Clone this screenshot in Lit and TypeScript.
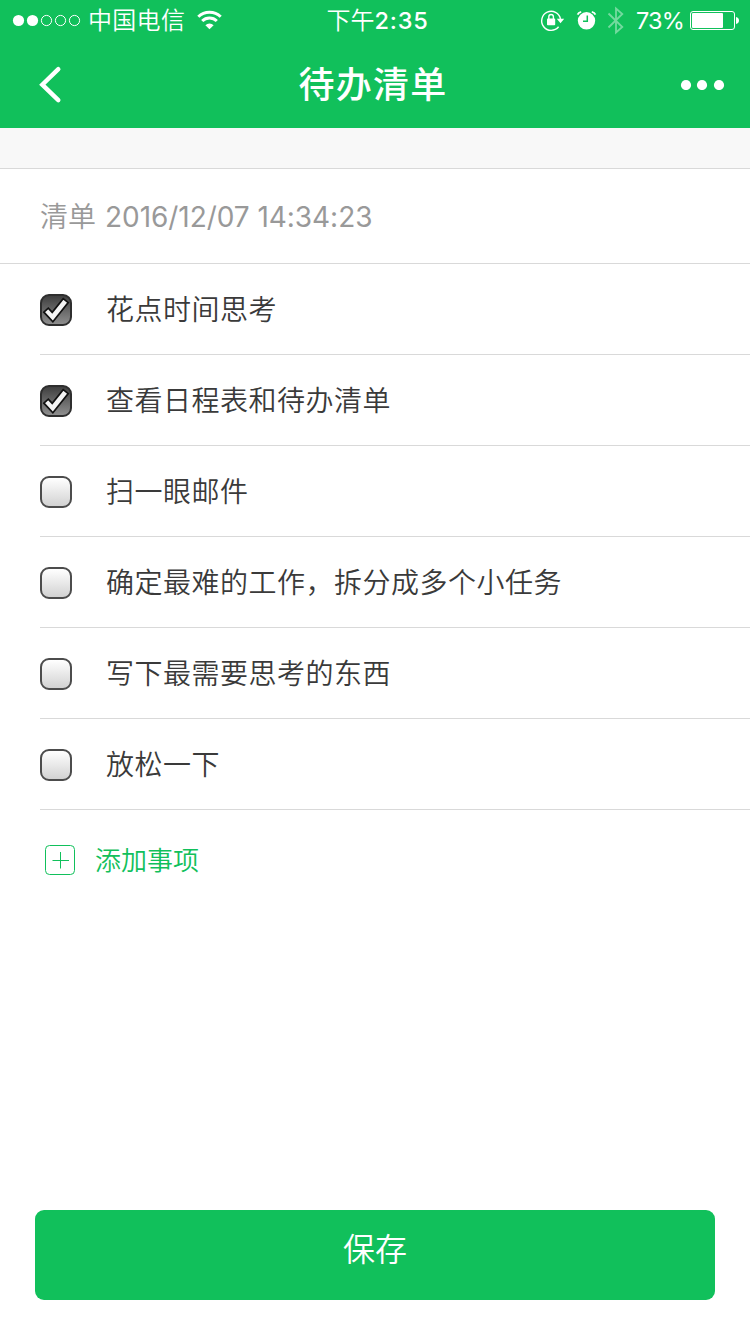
import { LitElement, html, css, svg } from "lit";
import { customElement, property, state } from "lit/decorators.js";

const carrierDots = [18.5, 32.5, 46.5, 60.5, 74.5];

@customElement("status-bar")
class StatusBar extends LitElement {
  static styles = css`
    :host { display: grid; grid-template-columns: 1fr auto 1fr; height: 40px; align-items: center; color: #fff; }
    .side { display: flex; align-items: center; height: 40px; }
    .right { justify-content: flex-end; }
    svg { display: block; flex: none; }
    .carrier { font-size: 24px; line-height: 38px; height: 40px; letter-spacing: 0.3px; font-weight: 350; margin: 0 12px 0 7px; white-space: nowrap; }
    .time { display: flex; height: 40px; font-size: 24px; line-height: 38px; white-space: nowrap; margin-left: 5px; }
    .period { font-weight: 350; }
    .clock { font-family: Inter, sans-serif; font-weight: 550; font-size: 23.5px; line-height: 42px; letter-spacing: 0.8px; }
    .percent { width: 48px; font-family: Inter, sans-serif; font-size: 23.5px; line-height: 40px; letter-spacing: -0.8px; margin: 1px 6px 0 10px; white-space: nowrap; }
  `;
  render() {
    return html`
      <div class="side">
        <svg width="81" height="40" viewBox="0 0 81 40">
          ${carrierDots.map((x, i) =>
            i < 2
              ? svg`<circle cx=${x} cy="20.5" r="5.6" fill="#fff"/>`
              : svg`<circle cx=${x} cy="20.5" r="5.1" fill="none" stroke="#fff"/>`
          )}
        </svg>
        <span class="carrier">中国电信</span>
        <svg width="25" height="40" viewBox="198 0 25 40" fill="none" stroke="#fff" stroke-width="3">
          <path d="M199.3 16.8a16 16 0 0 1 22.4 0M203.2 21a10.3 10.3 0 0 1 14.6 0"/>
          <path d="M206.4 25.2a5.8 5.8 0 0 1 8.2 0l-4.1 4.1z" fill="#fff" stroke="none"/>
        </svg>
      </div>
      <div class="time"><span class="period">下午</span><span class="clock">2:35</span></div>
      <div class="side right">
        <svg width="86" height="40" viewBox="540 0 86 40">
          <path d="M558.6 26.8A9.5 9.5 0 1 1 560.5 19" fill="none" stroke="#fff" stroke-width="1.4"/>
          <path d="M556.8 18.8h7.4l-3.7 4.4z" fill="#fff"/>
          <rect x="547" y="18.6" width="8.2" height="6.6" rx="0.8" fill="#fff"/>
          <path d="M548.8 19v-2.2a2.3 2.3 0 0 1 4.6 0V19" fill="none" stroke="#fff" stroke-width="1.4"/>
          <circle cx="586.5" cy="20.8" r="8.7" fill="#fff"/>
          <path d="M577.6 14.6q.8-2.2 3.6-2.8M591.8 11.8q2.8.6 3.6 2.8" fill="none" stroke="#fff" stroke-width="1.8"/>
          <path d="M587.3 15.5V21.2H583" fill="none" stroke="#11c05b" stroke-width="1.5"/>
          <path d="M608.5 13.5L622.3 27L616 32.5V8.5L622.3 14L608.5 27.5" fill="none" stroke="#fff" stroke-opacity="0.42" stroke-width="1.8"/>
        </svg>
        <span class="percent">73%</span>
        <svg width="60" height="40" viewBox="690 0 60 40">
          <rect x="690.5" y="11.5" width="44" height="18" rx="2.5" fill="none" stroke="#fff"/>
          <rect x="692" y="13" width="31" height="15" rx="1" fill="#fff"/>
          <path d="M736 17c4 0.6 4 6.4 0 7z" fill="#fff"/>
        </svg>
      </div>`;
  }
}

@customElement("check-box")
class CheckBox extends LitElement {
  @property({ type: Boolean }) checked = false;
  static styles = css`
    :host { display: block; width: 32px; height: 32px; margin-top: 2px; }
    .box { box-sizing: border-box; width: 32px; height: 32px; border: 2px solid #4c4c4c; border-radius: 9px; background: linear-gradient(#fff, #d2d2d2); }
    .box.on { border-color: #2e2e2e; background: linear-gradient(#404040, #8e8e8e); }
    svg { display: block; position: relative; left: -2px; top: -2px; }
  `;
  render() {
    return html`<div class="box ${this.checked ? "on" : ""}">
      ${this.checked
        ? html`<svg width="32" height="32" viewBox="0 0 32 32">
            <path d="M3.9 18.2L8.3 14.2L12.2 18.4L23.2 4.6L28.2 8.6L12.9 27.8Z" fill="#f4f4f4" stroke="#111" stroke-width="1.7"/>
          </svg>`
        : ""}
    </div>`;
  }
}

@customElement("app-root")
class AppRoot extends LitElement {
  @state() items = [
    { text: "花点时间思考", done: true },
    { text: "查看日程表和待办清单", done: true },
    { text: "扫一眼邮件", done: false },
    { text: "确定最难的工作，拆分成多个小任务", done: false },
    { text: "写下最需要思考的东西", done: false },
    { text: "放松一下", done: false },
  ];
  static styles = css`
    :host { display: flex; flex-direction: column; height: 1334px; background: #fff; font-family: "Noto Sans CJK SC", sans-serif; color: #3a3a3a; }
    svg { display: block; flex: none; }
    .top { background: #11c05b; height: 128px; color: #fff; }
    .nav { display: grid; grid-template-columns: 1fr auto 1fr; align-items: center; height: 88px; }
    .back { padding-left: 38px; }
    .heading { margin: 0; padding-right: 4px; height: 88px; font-size: 36px; font-weight: 500; line-height: 85px; letter-spacing: 1.3px; }
    .more { display: flex; justify-content: flex-end; padding-right: 24px; }
    .band { height: 40px; background: #f8f8f8; border-bottom: 1px solid #d9d9d9; }
    .name { display: flex; gap: 9px; height: 94px; line-height: 92px; padding-left: 40px; border-bottom: 1px solid #d9d9d9; font-size: 28px; color: #999; font-weight: 350; }
    .stamp { font-family: Inter, sans-serif; font-weight: 400; font-size: 28px; line-height: 96px; letter-spacing: -0.05px; }
    .list { margin: 0; padding: 0 0 0 40px; list-style: none; }
    .item { display: flex; align-items: center; gap: 34px; height: 90px; border-bottom: 1px solid #d9d9d9; font-size: 28px; font-weight: 350; letter-spacing: 0.5px; line-height: 88px; }
    .label { height: 90px; }
    .add { display: flex; align-items: center; gap: 19px; height: 100px; padding-left: 45px; color: #11c05b; font-size: 26px; font-weight: 350; }
    .add span { padding-bottom: 3px; }
    .save { display: block; margin: auto 35px 34px; height: 90px; padding: 0 0 16px; border: 0; border-radius: 9px; background: #11c05b; color: #fff; font: 350 32px "Noto Sans CJK SC", sans-serif; }
  `;
  render() {
    return html`
      <header class="top">
        <status-bar></status-bar>
        <div class="nav">
          <div class="back">
            <svg width="26" height="40" viewBox="0 0 26 40"><path d="M20.3 5.2L4.3 20.7L20.3 36.2" fill="none" stroke="#fff" stroke-width="4.4" stroke-linecap="round"/></svg>
          </div>
          <h1 class="heading">待办清单</h1>
          <div class="more">
            <svg width="46" height="12" viewBox="0 0 46 12" fill="#fff"><circle cx="6" cy="7" r="5.1"/><circle cx="22" cy="7" r="5.1"/><circle cx="39" cy="7" r="5.1"/></svg>
          </div>
        </div>
      </header>
      <div class="band"></div>
      <div class="name"><span>清单</span><span class="stamp">2016/12/07 14:34:23</span></div>
      <ul class="list">
        ${this.items.map(
          (item) => html`<li class="item"><check-box ?checked=${item.done}></check-box><span class="label">${item.text}</span></li>`
        )}
      </ul>
      <div class="add">
        <svg width="31" height="30" viewBox="0 0 31 30" fill="none" stroke="#11c05b"><rect x=".5" y=".5" width="29" height="29" rx="4"/><path d="M7.5 15.5h16.5M15.5 7v16.5"/></svg>
        <span>添加事项</span>
      </div>
      <button class="save">保存</button>`;
  }
}
